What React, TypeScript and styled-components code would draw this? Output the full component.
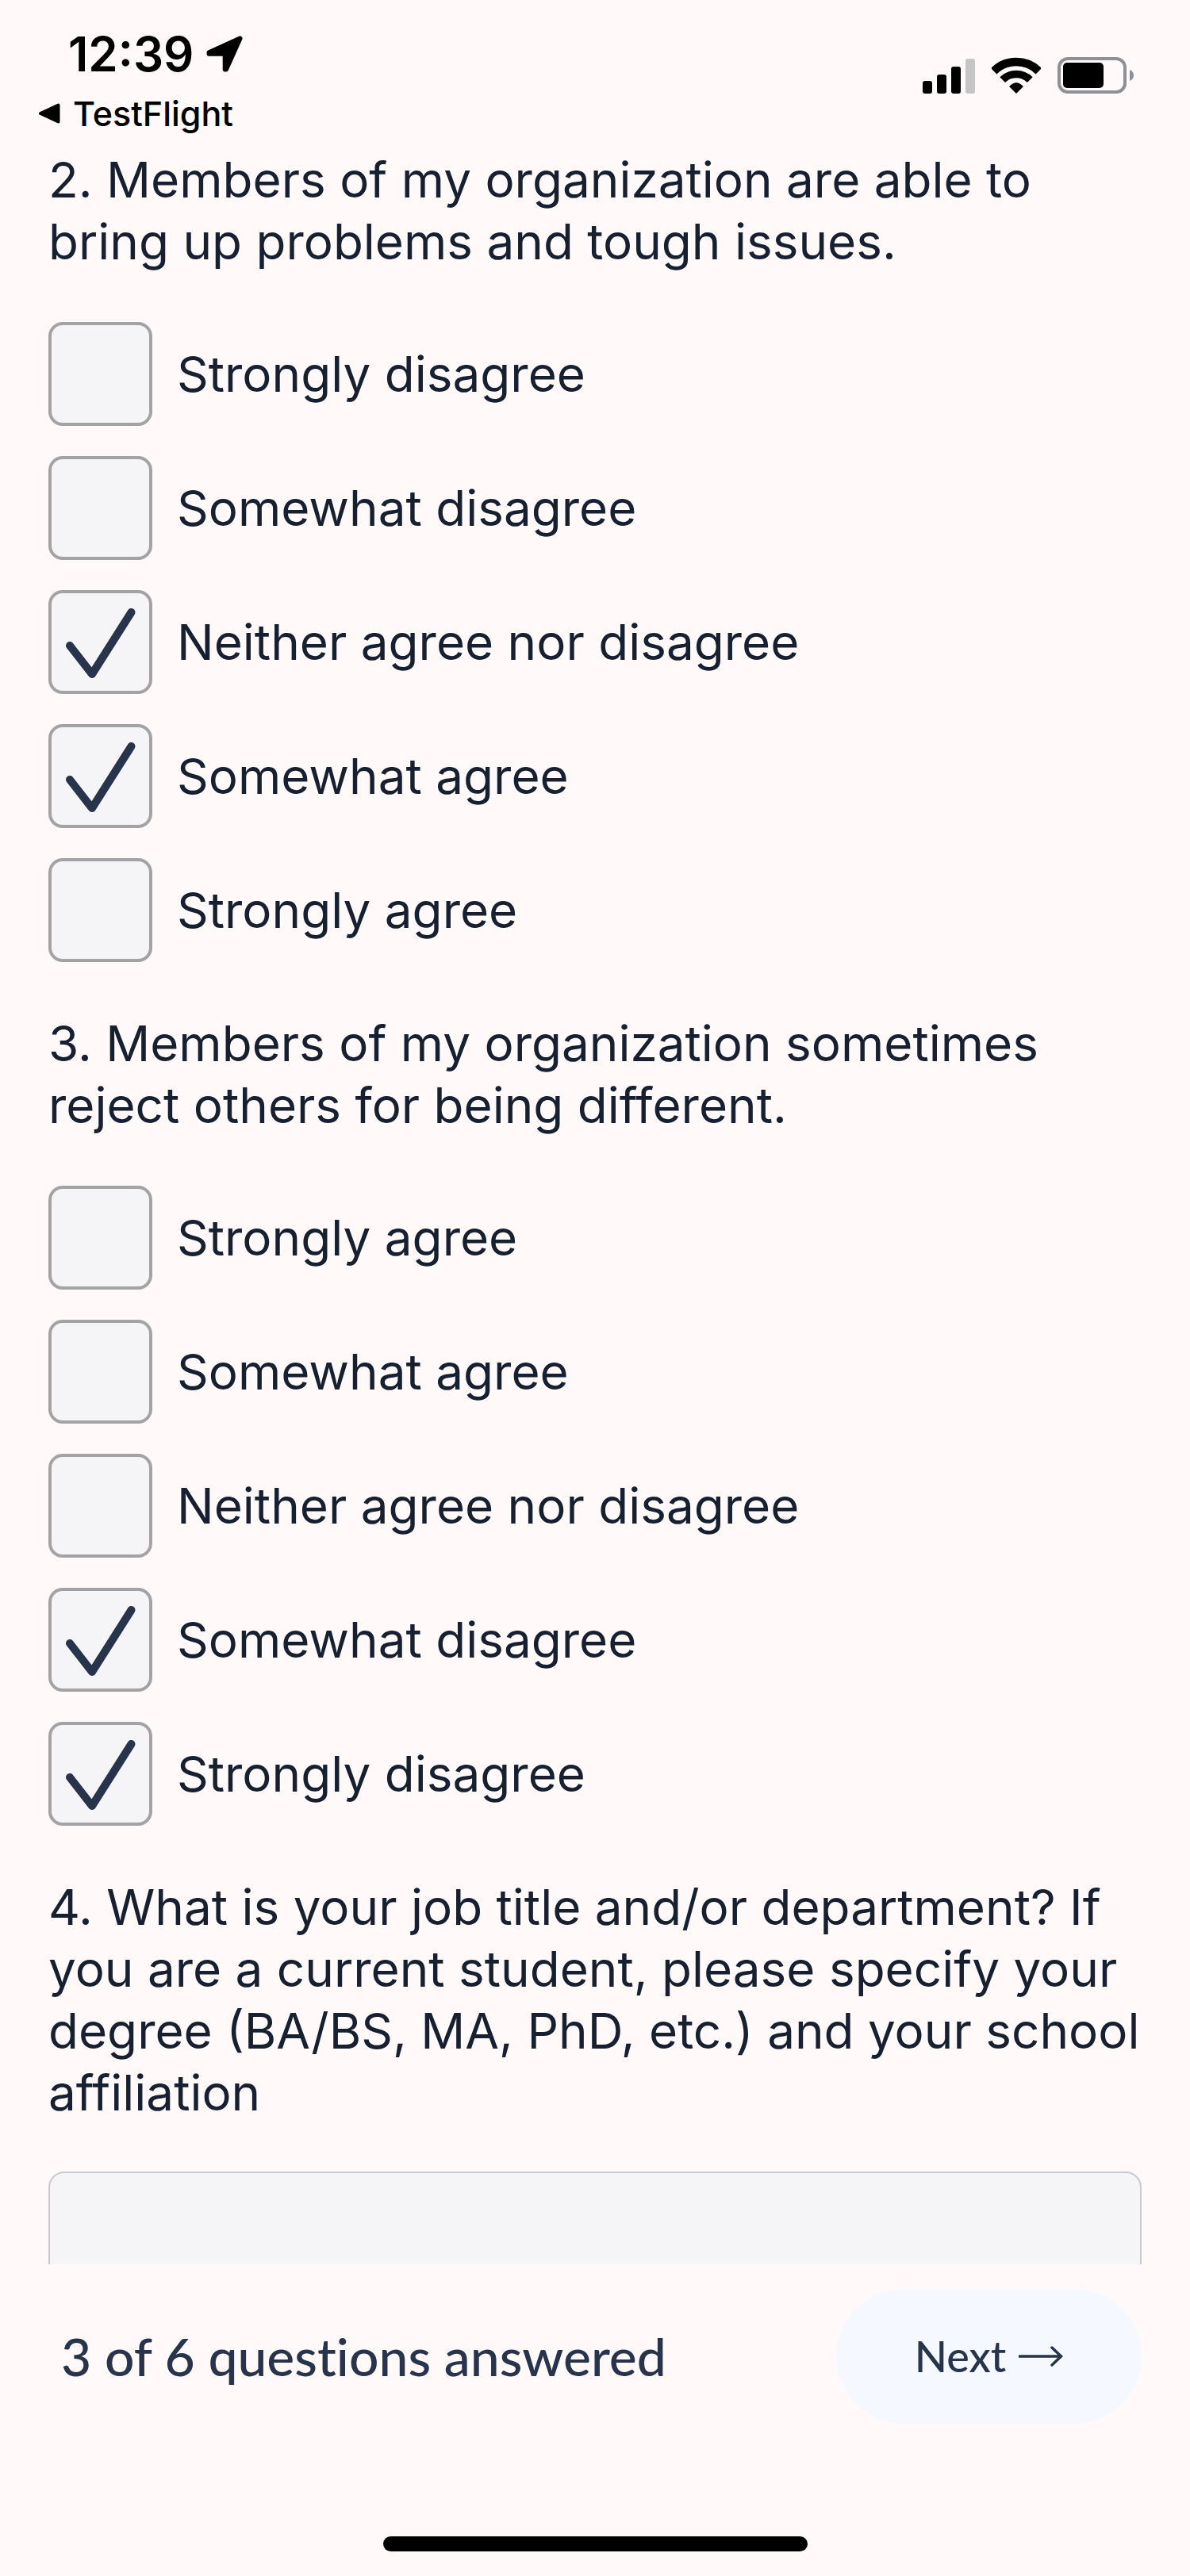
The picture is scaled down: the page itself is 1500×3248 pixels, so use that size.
import { useState } from "react";
import styled, { createGlobalStyle } from "styled-components";

const ink = "#162030";
const navy = "#28344c";
const surface = "#f5f5f7";
const page = "#fff9f9";

const GlobalStyle = createGlobalStyle`
  *, *::before, *::after { box-sizing: border-box; }
  body {
    margin: 0;
    background: ${page};
    color: ${ink};
    font-family: Inter, "Liberation Sans", sans-serif;
  }
`;

const Screen = styled.div`
  display: flex;
  flex-direction: column;
  height: 100vh;
  overflow: hidden;
`;

const StatusBar = styled.header`
  display: flex;
  justify-content: space-between;
  align-items: center;
  flex-shrink: 0;
  padding: 32px 70px 17px 48px;
  color: #000;
`;

const StatusLeft = styled.div`
  display: flex;
  flex-direction: column;
  gap: 11px;
`;

const Clock = styled.div`
  display: flex;
  align-items: center;
  gap: 16px;
  padding-left: 38px;
  font-size: 60px;
  line-height: 72px;
  font-weight: 600;
`;

const BackLink = styled.a`
  display: flex;
  align-items: center;
  gap: 16px;
  color: inherit;
  text-decoration: none;
  font-size: 43px;
  line-height: 56px;
  font-weight: 500;
`;

const StatusIcons = styled.div`
  display: flex;
  align-items: center;
  gap: 21px;
  padding-bottom: 14px;
`;

const Survey = styled.main`
  flex: 1;
  min-height: 0;
  overflow-y: auto;
  scrollbar-width: none;
  display: flex;
  flex-direction: column;
  gap: 64px;
  padding: 0 61px;
`;

const Question = styled.fieldset`
  flex-shrink: 0;
  min-width: 0;
  margin: 0;
  padding: 0;
  border: 0;
`;

const Prompt = styled.legend`
  padding: 0 0 62px;
  font-size: 62px;
  line-height: 78px;
`;

const AnswerLabel = styled.label`
  display: block;
  padding: 0 0 60px;
  font-size: 62px;
  line-height: 78px;
`;

const Options = styled.div`
  display: flex;
  flex-direction: column;
  align-items: flex-start;
  gap: 38px;
`;

const Option = styled.label`
  display: flex;
  align-items: center;
  gap: 31px;
  font-size: 62px;
  line-height: 78px;
`;

const Tick = styled.span`
  display: grid;
  width: 131px;
  height: 131px;
  flex-shrink: 0;

  & > * {
    grid-area: 1 / 1;
  }

  svg {
    pointer-events: none;
  }
`;

const Checkbox = styled.input`
  appearance: none;
  width: 100%;
  height: 100%;
  margin: 0;
  border: 4px solid #a3a3a5;
  border-radius: 18px;
  background: ${surface};
`;

const Answer = styled.textarea`
  display: block;
  width: 100%;
  height: 240px;
  padding: 24px;
  border: 2px solid #cbcbcf;
  border-radius: 20px;
  background: ${surface};
  color: inherit;
  font: inherit;
  resize: none;
`;

const Footer = styled.footer`
  display: flex;
  flex-direction: column;
  flex-shrink: 0;
  gap: 142px;
  padding: 31px 61px;
  font-family: Lato, "Liberation Sans", sans-serif;
  font-variant-ligatures: none;
  color: ${navy};
`;

const Actions = styled.div`
  display: flex;
  justify-content: space-between;
  align-items: center;
`;

const Progress = styled.p`
  margin: 0;
  padding-left: 16px;
  font-size: 66px;
  line-height: 78px;
  font-weight: 500;
`;

const NextButton = styled.button`
  display: flex;
  align-items: center;
  justify-content: center;
  gap: 16px;
  width: 385px;
  height: 170px;
  padding: 0;
  border: 0;
  border-radius: 85px;
  background: #f5f8ff;
  color: inherit;
  font-family: inherit;
  font-size: 54px;
  line-height: 72px;
  font-weight: 500;
`;

const HomeIndicator = styled.div`
  align-self: center;
  width: 535px;
  height: 19px;
  border-radius: 10px;
  background: #000;
`;

const LocationIcon = () => (
  <svg width="46" height="46" viewBox="0 0 46 46" aria-hidden="true">
    <path
      d="M42.5 3.5L3.5 21.2V22.7H23.7V42.5H25Z"
      fill="#000"
      stroke="#000"
      strokeWidth="6"
      strokeLinejoin="round"
    />
  </svg>
);

const BackIcon = () => (
  <svg width="28" height="26" viewBox="0 0 28 26" aria-hidden="true">
    <path d="M3 13L25.5 2.5V23.5Z" fill="#000" stroke="#000" strokeWidth="4" strokeLinejoin="round" />
  </svg>
);

const SignalIcon = () => (
  <svg width="66" height="46" viewBox="0 0 66 46" aria-hidden="true">
    <rect x="0" y="30" width="12" height="16" rx="3" />
    <rect x="18" y="22" width="12" height="24" rx="3" />
    <rect x="36" y="12" width="12" height="34" rx="3" />
    <rect x="54" y="2" width="12" height="44" rx="3" fill="#c6c5c6" />
  </svg>
);

const WifiIcon = () => (
  <svg width="62" height="46" viewBox="0 0 62 46" aria-hidden="true">
    <g fill="none" stroke="#000">
      <path d="M2.7 17.7A40 40 0 0 1 59.3 17.7" strokeWidth="10.5" />
      <path d="M13.7 28.7A24.5 24.5 0 0 1 48.3 28.7" strokeWidth="9.5" />
    </g>
    <path d="M31 46L22 37Q31 27.5 40 37Z" />
  </svg>
);

const BatteryIcon = () => (
  <svg width="97" height="46" viewBox="0 0 97 46" aria-hidden="true">
    <rect x="2" y="2" width="83" height="42" rx="11" fill="none" stroke="#8f9096" strokeWidth="4" />
    <rect x="7" y="7" width="51" height="32" rx="5" />
    <path d="M91 16Q96 18 96 23T91 30Z" fill="#8f9096" />
  </svg>
);

const CheckMark = () => (
  <svg width="131" height="131" viewBox="0 0 131 131" aria-hidden="true">
    <path
      d="M27 70L55 106L104.5 28"
      fill="none"
      stroke={navy}
      strokeWidth="10"
      strokeLinecap="round"
      strokeLinejoin="round"
    />
  </svg>
);

const ArrowIcon = () => (
  <svg width="56" height="26" viewBox="0 0 56 26" aria-hidden="true">
    <path
      d="M1 13H53M42 2L53.5 13L42 24"
      fill="none"
      stroke={navy}
      strokeWidth="3.5"
      strokeLinecap="round"
    />
  </svg>
);

type Choice = { label: string; checked: boolean };

const questionTwo: Choice[] = [
  { label: "Strongly disagree", checked: false },
  { label: "Somewhat disagree", checked: false },
  { label: "Neither agree nor disagree", checked: true },
  { label: "Somewhat agree", checked: true },
  { label: "Strongly agree", checked: false },
];

const questionThree: Choice[] = [
  { label: "Strongly agree", checked: false },
  { label: "Somewhat agree", checked: false },
  { label: "Neither agree nor disagree", checked: false },
  { label: "Somewhat disagree", checked: true },
  { label: "Strongly disagree", checked: true },
];

function ChoiceRow({ label, checked }: Choice) {
  const [on, setOn] = useState(checked);
  return (
    <Option>
      <Tick>
        <Checkbox type="checkbox" checked={on} onChange={(e) => setOn(e.target.checked)} />
        {on && <CheckMark />}
      </Tick>
      {label}
    </Option>
  );
}

function ChoiceQuestion({ prompt, choices }: { prompt: string; choices: Choice[] }) {
  return (
    <Question>
      <Prompt>{prompt}</Prompt>
      <Options>
        {choices.map((choice) => (
          <ChoiceRow key={choice.label} {...choice} />
        ))}
      </Options>
    </Question>
  );
}

export default function App() {
  return (
    <Screen>
      <GlobalStyle />
      <StatusBar>
        <StatusLeft>
          <Clock>
            12:39
            <LocationIcon />
          </Clock>
          <BackLink href="#">
            <BackIcon />
            TestFlight
          </BackLink>
        </StatusLeft>
        <StatusIcons>
          <SignalIcon />
          <WifiIcon />
          <BatteryIcon />
        </StatusIcons>
      </StatusBar>
      <Survey>
        <ChoiceQuestion
          prompt="2. Members of my organization are able to bring up problems and tough issues."
          choices={questionTwo}
        />
        <ChoiceQuestion
          prompt="3. Members of my organization sometimes reject others for being different."
          choices={questionThree}
        />
        <Question as="div">
          <AnswerLabel htmlFor="job-title">
            4. What is your job title and/or department? If you are a current student, please specify your
            degree (BA/BS, MA, PhD, etc.) and your school affiliation
          </AnswerLabel>
          <Answer id="job-title" />
        </Question>
      </Survey>
      <Footer>
        <Actions>
          <Progress>3 of 6 questions answered</Progress>
          <NextButton type="button">
            Next
            <ArrowIcon />
          </NextButton>
        </Actions>
        <HomeIndicator />
      </Footer>
    </Screen>
  );
}
